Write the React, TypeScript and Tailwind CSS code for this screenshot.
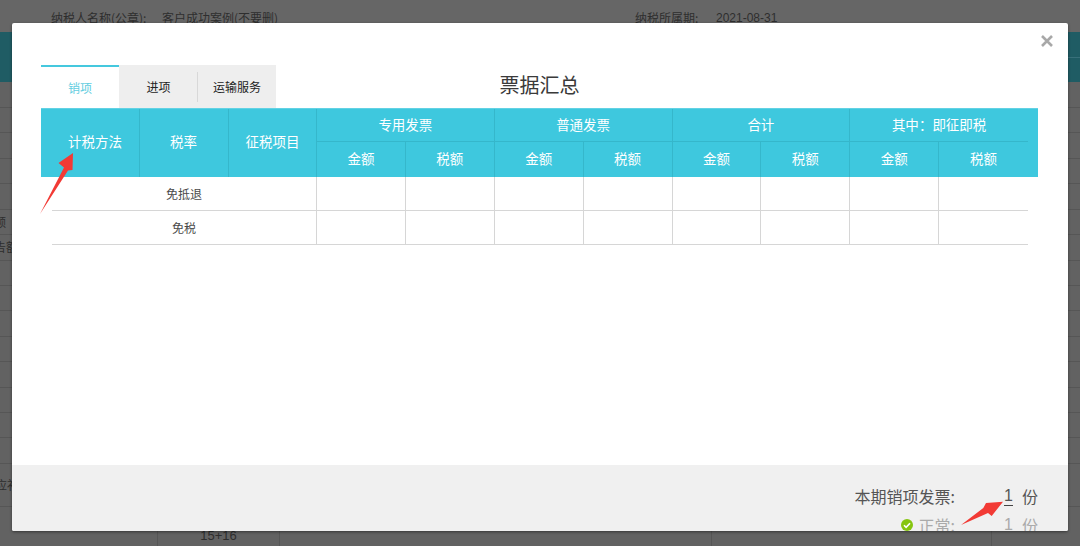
const FONT = "font-['Noto_Sans_CJK_SC','Noto_Sans',sans-serif]";

const leftLabels: Record<number, string> = { 4: "额", 5: "告额" };

function Background() {
  return (
    <div className="h-[546px] w-[1080px] overflow-hidden bg-[#626262] text-[#2e2e2e]">
      <div className="flex h-[32px] items-start bg-[#666666] pt-[9px] text-[12px] leading-[18px]">
        <span className="ml-[51px] w-[111px]">纳税人名称(公章):</span>
        <span className="w-[473px]">客户成功案例(不要删)</span>
        <span className="w-[81px]">纳税所属期:</span>
        <span className="font-['Liberation_Sans']">2021-08-31</span>
      </div>
      <div className="h-[50px] bg-[#1f5c64]">
        <div className="ml-auto h-[26px] w-[12px] border-b border-[#38707a]" />
      </div>
      <div className="h-[26px] border-b border-[#565656]" />
      {Array.from({ length: 14 }).map((_, i) => (
        <div
          key={i}
          className="flex h-[25.43px] items-center overflow-hidden border-b border-[#565656] text-[12px]"
        >
          {leftLabels[i] ? <span className="-ml-[6px] w-[19px] whitespace-nowrap">{leftLabels[i]}</span> : null}
        </div>
      ))}
      <div className="flex h-[43px] items-center overflow-hidden border-b border-[#565656] text-[12px]">
        <span className="-ml-[5px] whitespace-nowrap">应补</span>
      </div>
      <div className="flex h-[39px] text-[13px]">
        <div className="w-[158px] border-r border-[#565656]" />
        <div className="flex w-[122px] justify-center border-r border-[#565656] pt-[19px] font-['Liberation_Sans']">15+16</div>
        <div className="w-[432px] border-r border-[#565656]" />
        <div className="w-[280px] border-r border-[#565656]" />
      </div>
    </div>
  );
}

function HeadCell({ children, className = "" }: { children: React.ReactNode; className?: string }) {
  return (
    <div className={`flex items-center justify-center border-r border-[#35b7cb] pb-[2px] text-[13.5px] text-white ${className}`}>
      {children}
    </div>
  );
}

function Sums() {
  return (
    <>
      <HeadCell>金额</HeadCell>
      <HeadCell>税额</HeadCell>
    </>
  );
}

function BodyRow({ label }: { label: string }) {
  return (
    <div className="grid h-[34px] grid-cols-[265px_repeat(8,88.875px)] border-b border-[#d6d6d6] text-[12px] text-[#4a4a4a]">
      <div className="flex items-center justify-center border-r border-[#d6d6d6]">{label}</div>
      {Array.from({ length: 8 }).map((_, i) => (
        <div key={i} className={i === 7 ? "" : "border-r border-[#d6d6d6]"} />
      ))}
    </div>
  );
}

function Modal() {
  return (
    <div className="absolute left-[12px] top-[23px] flex h-[508px] w-[1056px] flex-col overflow-hidden rounded-[2px] bg-white shadow-[0_1px_3px_rgba(0,0,0,0.45)]">
      <svg className="absolute right-[15px] top-[12px] h-[12px] w-[12px]" viewBox="0 0 12 12" fill="none" stroke="#a8a8a8" strokeWidth="2.6">
        <path d="M1 1l10 10M11 1L1 11" />
      </svg>

      <div className="flex-1 pl-[29px] pr-[30px] pt-[42px]">
        <div className="grid h-[43px] grid-cols-[1fr_auto_1fr]">
          <div className="flex text-[12px] text-[#222]">
            <div className="flex w-[78px] items-center justify-center border-t-2 border-[#45c8de] text-[#62cde0]">销项</div>
            <div className="flex w-[157px] items-center bg-[#eeeeee]">
              <div className="w-[78px] pl-[1px] text-center">进项</div>
              <div className="flex h-[30px] flex-1 items-center justify-center border-l border-[#d8d8d8]">运输服务</div>
            </div>
          </div>
          <div className="pt-[6px] text-[20px] leading-[28px] text-[#3a3a3a]">票据汇总</div>
          <div />
        </div>

        <div className="border-t border-[#62d2e4] bg-[#3ec8de] pl-[11px] pr-[10px]">
          <div className="grid h-[68px] grid-cols-[88px_89px_88px_repeat(8,88.875px)] grid-rows-[33px_35px]">
            <HeadCell className="row-span-2 pb-[3px] pr-[1px]">计税方法</HeadCell>
            <HeadCell className="row-span-2 pb-[3px] pr-[1px]">税率</HeadCell>
            <HeadCell className="row-span-2 pb-[3px]">征税项目</HeadCell>
            <HeadCell className="col-span-2 border-b">专用发票</HeadCell>
            <HeadCell className="col-span-2 border-b">普通发票</HeadCell>
            <HeadCell className="col-span-2 border-b">合计</HeadCell>
            <HeadCell className="col-span-2 border-b border-r-0">其中{"\uFF1A"}即征即税</HeadCell>
            <Sums />
            <Sums />
            <Sums />
            <HeadCell>金额</HeadCell>
            <HeadCell className="border-r-0">税额</HeadCell>
          </div>
        </div>
        <div className="pl-[11px] pr-[10px]">
          <BodyRow label="免抵退" />
          <BodyRow label="免税" />
        </div>
      </div>

      <div className="h-[66px] bg-[#f0f0f0] pt-[20px] text-[16px]">
        <div className="flex h-[22px] items-center justify-end pr-[30px] leading-[22px] text-[#555]">
          <span>本期销项发票:</span>
          <span className="ml-[49px] w-[9px] border-b border-[#444] text-center font-['Liberation_Sans'] leading-[19px]">1</span>
          <span className="ml-[9px] w-[16px]">份</span>
        </div>
        <div className="mt-[7px] flex h-[22px] items-center justify-end pr-[30px] leading-[22px] text-[#aaaaaa]">
          <svg className="mr-[6px] h-[12px] w-[12px]" viewBox="0 0 12 12">
            <circle cx="6" cy="6" r="6" fill="#86c50f" />
            <path d="M3 6.2l2.1 2.1L9 4.2" fill="none" stroke="#fff" strokeWidth="1.6" />
          </svg>
          <span>正常:</span>
          <span className="ml-[49px] w-[9px] text-center font-['Liberation_Sans']">1</span>
          <span className="ml-[9px] w-[16px]">份</span>
        </div>
      </div>
    </div>
  );
}

function Arrows() {
  return (
    <>
      <svg className="absolute left-[36px] top-[150px] h-[70px] w-[42px]" viewBox="0 0 42 70" fill="#f23a35">
        <path d="M4 64 L28 17.5 L22.5 13 L37 3 L36.5 20 L32 20.5 Z" />
      </svg>
      <svg className="absolute left-[958px] top-[498px] h-[30px] w-[50px]" viewBox="0 0 50 30" fill="#f23a35">
        <path d="M3 27 L25.3 10 L28 5 L45 3.7 L33.7 18 L30 15 Z" />
      </svg>
    </>
  );
}

export default function App() {
  return (
    <div className={`relative h-[546px] w-[1080px] overflow-hidden ${FONT}`}>
      <Background />
      <Modal />
      <Arrows />
    </div>
  );
}
